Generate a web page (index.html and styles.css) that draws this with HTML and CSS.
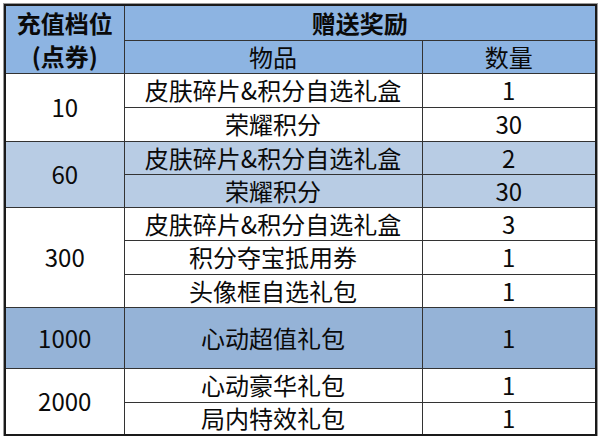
FILE: index.html
```html
<!DOCTYPE html>
<html lang="zh-CN">
<head>
<meta charset="utf-8">
<link rel="stylesheet" href="styles.css">
</head>
<body>
<table class="rewards">
  <colgroup>
    <col class="c1"><col class="c2"><col class="c3">
  </colgroup>
  <tr class="hd r35">
    <th rowspan="2" class="tier-head"><span class="ln">充值档位</span><span class="ln">(点券)</span></th>
    <th colspan="2">赠送奖励</th>
  </tr>
  <tr class="hd r33">
    <td>物品</td>
    <td>数量</td>
  </tr>
  <tr class="r34">
    <td rowspan="2">10</td>
    <td>皮肤碎片&amp;积分自选礼盒</td>
    <td>1</td>
  </tr>
  <tr class="r34">
    <td>荣耀积分</td>
    <td>30</td>
  </tr>
  <tr class="light r33">
    <td rowspan="2">60</td>
    <td>皮肤碎片&amp;积分自选礼盒</td>
    <td>2</td>
  </tr>
  <tr class="light r33">
    <td>荣耀积分</td>
    <td>30</td>
  </tr>
  <tr class="r33">
    <td rowspan="3">300</td>
    <td>皮肤碎片&amp;积分自选礼盒</td>
    <td>3</td>
  </tr>
  <tr class="r34">
    <td>积分夺宝抵用券</td>
    <td>1</td>
  </tr>
  <tr class="r33">
    <td>头像框自选礼包</td>
    <td>1</td>
  </tr>
  <tr class="mid r61">
    <td>1000</td>
    <td>心动超值礼包</td>
    <td>1</td>
  </tr>
  <tr class="r34">
    <td rowspan="2">2000</td>
    <td>心动豪华礼包</td>
    <td>1</td>
  </tr>
  <tr class="r33">
    <td>局内特效礼包</td>
    <td>1</td>
  </tr>
</table>
</body>
</html>
```

FILE: styles.css
```css
html, body {
  margin: 0;
  padding: 0;
  background: #ffffff;
}
body {
  padding: 4px 0 0 4px;
  font-family: "Noto Sans CJK SC", "Noto Sans", sans-serif;
  color: #0a0a0a;
}
.rewards {
  border-collapse: collapse;
  border: 2px solid #1a1a1a;
  box-shadow: 0 0 0 1px #9a9a9a;
  table-layout: fixed;
  width: 591px;
  font-size: 24px;
}
.c1 { width: 119px; }
.c2 { width: 298px; }
.c3 { width: 174px; }
.rewards th,
.rewards td {
  border: 1px solid #333;
  padding: 0;
  text-align: center;
  vertical-align: middle;
  line-height: 28px;
  font-weight: normal;
  white-space: nowrap;
}
.rewards th {
  font-weight: bold;
}
.tier-head .ln {
  display: block;
  height: 33px;
  line-height: 33px;
  overflow: visible;
}
.hd th, .hd td { background: #8db4e2; }
.light td { background: #b8cce4; }
.mid td { background: #95b3d7; }
.r33 { height: 33px; }
.r34 { height: 34px; }
.r35 { height: 35px; }
.r61 { height: 61px; }
```
